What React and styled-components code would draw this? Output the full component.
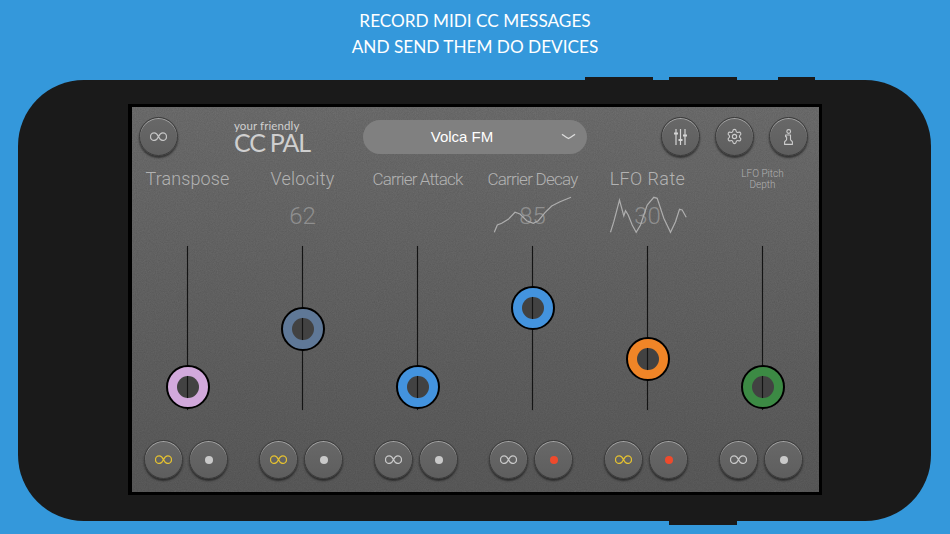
import React from "react";
import styled, { createGlobalStyle } from "styled-components";
import { Settings } from "lucide-react";

const Global = createGlobalStyle`
  html, body { margin: 0; padding: 0; background: #3498db; overflow: hidden; }
  body { width: 950px; height: 534px; font-family: "Roboto", "Liberation Sans", sans-serif; }
`;

const noise = `url("data:image/svg+xml,%3Csvg xmlns='http://www.w3.org/2000/svg' width='200' height='200'%3E%3Cfilter id='n'%3E%3CfeTurbulence type='fractalNoise' baseFrequency='.9' numOctaves='2'/%3E%3CfeColorMatrix values='0 0 0 0 0 0 0 0 0 0 0 0 0 0 0 0 0 0 .55 -.1'/%3E%3C/filter%3E%3Crect width='200' height='200' filter='url(%23n)' opacity='.3'/%3E%3C/svg%3E")`;

const Page = styled.div`
  width: 950px;
  height: 534px;
  background: #3498db;
`;
const Headline = styled.h1`
  margin: 0;
  height: 77px;
  padding-top: 8px;
  box-sizing: border-box;
  text-align: center;
  font: 400 17.2px/25.5px "Lato", "Liberation Sans", sans-serif;
  color: #fff;
`;
const SideKey = styled.div`
  display: flex;
  height: 3px;
  margin-left: 585px;
  gap: 16px;
`;
const Key = styled.span`
  width: ${(p) => p.$w}px;
  margin-right: ${(p) => p.$after || 0}px;
  background: #1a1a1a;
`;
const Phone = styled.div`
  position: relative;
  width: 913px;
  height: 441px;
  margin-left: 18px;
  box-sizing: border-box;
  padding: 24px 109px 26px 110px;
  border-radius: 66px;
  background: #1a1a1a;
`;
const BottomKey = styled.span`
  position: absolute;
  left: 651px;
  bottom: -4px;
  width: 68px;
  height: 4px;
  background: #1a1a1a;
`;
const Screen = styled.div`
  width: 694px;
  height: 391px;
  box-sizing: border-box;
  border-style: solid;
  border-color: #000;
  border-width: 3px 3px 3px 4px;
  background: ${noise}, linear-gradient(180deg, #6e6e6e 0%, #656565 45%, #5b5b5b 100%);
  display: flex;
  flex-direction: column;
  overflow: hidden;
`;
const Header = styled.header`
  display: flex;
  align-items: center;
  height: 39px;
  margin-top: 10px;
  padding-left: 7px;
`;
const Round = styled.button`
  flex: none;
  width: 39px;
  height: 39px;
  padding: 0;
  display: flex;
  align-items: center;
  justify-content: center;
  border: 1px solid #3a3a3a;
  border-radius: 50%;
  background: linear-gradient(180deg, #686868, #5e5e5e);
  color: #c4c4c4;
  box-shadow: inset 0 1px 0 rgba(255, 255, 255, 0.4), 0 2px 2px rgba(0, 0, 0, 0.5);
`;
const Logo = styled.div`
  flex: none;
  width: 76px;
  margin: 0 53px 0 56px;
  color: #cfcfcf;
  font-family: "Lato", sans-serif;
`;
const LogoSmall = styled.div`
  font-size: 11.5px;
  line-height: 12px;
  letter-spacing: 0.1px;
  white-space: nowrap;
`;
const LogoBig = styled.div`
  font-size: 25px;
  line-height: 21px;
  letter-spacing: -1.2px;
  white-space: nowrap;
`;
const Preset = styled.div`
  flex: none;
  width: 224px;
  height: 34px;
  display: flex;
  align-items: center;
  border-radius: 17px;
  background: #808080;
  color: #fff;
  font: 400 15px "Liberation Sans", sans-serif;
`;
const PresetName = styled.span`
  width: 198px;
  text-align: center;
`;
const Tools = styled.div`
  display: flex;
  gap: 15px;
  margin-left: 74px;
`;
const Channels = styled.div`
  display: grid;
  grid-template-columns: repeat(6, 115px);
  width: 690px;
  margin-left: -2px;
  margin-top: 9px;
`;
const Channel = styled.section`
  display: flex;
  flex-direction: column;
  align-items: center;
`;
const Label = styled.div`
  height: 28px;
  display: flex;
  align-items: center;
  justify-content: center;
  text-align: center;
  color: #b2b2b2;
  white-space: nowrap;
  font-weight: 300;
  font-size: ${(p) => p.$fs || 18}px;
  letter-spacing: ${(p) => p.$ls || 0}px;
  line-height: ${(p) => (p.$fs === 10 ? "11px" : "28px")};
`;
const Readout = styled.div`
  position: relative;
  width: 80px;
  height: 40px;
  margin-top: 3px;
  display: flex;
  align-items: center;
  justify-content: center;
  color: #8f8f8f;
  font-size: 24px;
  font-weight: 300;
`;
const Spark = styled.svg`
  position: absolute;
  left: 0;
  top: -1px;
`;
const Track = styled.div`
  position: relative;
  width: 1px;
  height: 164px;
  margin-top: 10px;
  background: #141414;
  box-shadow: 0 0 1px rgba(0, 0, 0, 0.6);
`;
const Thumb = styled.div`
  position: absolute;
  left: 50%;
  top: ${(p) => p.$top}px;
  width: 44px;
  height: 44px;
  box-sizing: border-box;
  transform: translate(-50%, -50%);
  display: flex;
  align-items: center;
  justify-content: center;
  border: 2px solid #000;
  border-radius: 50%;
  background: ${(p) => p.$color};
`;
const Hole = styled.div`
  position: relative;
  width: 22px;
  height: 22px;
  border-radius: 50%;
  background: #424242;
  &::after {
    content: "";
    position: absolute;
    left: 10.5px;
    top: 0;
    width: 1px;
    height: 22px;
    background: #141414;
    box-shadow: 0 0 1px rgba(0, 0, 0, 0.5);
  }
`;
const Pair = styled.div`
  display: flex;
  gap: 6px;
  margin-top: 30px;
  padding-right: 3px;
`;
const Dot = styled.span`
  width: 8px;
  height: 8px;
  border-radius: 50%;
  background: ${(p) => (p.$on ? "#ee4a2c" : "#c9c9c9")};
`;

const Loop = ({ color = "currentColor", w = 17 }) => (
  <svg width={w} height={(w * 10) / 18} viewBox="0 0 18 10" fill="none" stroke={color} strokeWidth="1.35">
    <path d="M9 5C8 3 6.6 1 4.5 1a4 4 0 0 0 0 8C6.6 9 8 7 9 5s2.4-4 4.5-4a4 4 0 0 1 0 8C11.4 9 10 7 9 5z" />
  </svg>
);
const Mixer = () => (
  <svg width="13" height="16" viewBox="0 0 13 16" fill="none" stroke="#d4d4d4" strokeWidth="1.2" strokeLinecap="butt">
    <path d="M2 0v16M6.5 0v16M11 0v16" />
    <path d="M0 4.5h4M4.5 11h4M9 6.5h4" strokeWidth="1.8" />
  </svg>
);
const Pawn = () => (
  <svg width="9" height="16" viewBox="0 0 9 16" fill="none" stroke="#cccccc" strokeWidth="1.1" strokeLinejoin="round">
    <circle cx="4.7" cy="2.5" r="1.9" />
    <path d="M1.6 6h4.9v4.6c0 .9 1.6 1.3 1.9 2.2v2.6H.6v-2.6c.3-.9 2-1.3 2-2.2V7.8h-1z" />
  </svg>
);

const decay = "1.3,37.3 4.3,30 8.7,28.3 15.3,24.3 22,17.3 27,19 33.7,25.7 40.3,28.3 45.3,25.7 52,17.7 58.7,11 67,6.7 78,2.3";
const lfo = "2.5,37.3 5.8,26.7 11.5,5 15.8,21 17.5,15.7 20.2,20 24.2,30 28.2,37.3 32.5,30 39.2,10 45.8,2.3 49.2,3.3 55.8,23.3 62.5,37.3 67.5,26.7 71.5,14.3 74.2,15 78.2,22.3";

const channels = [
  { name: "Transpose", ls: 0.1, color: "#d2a9dc", y: 141, loop: true },
  { name: "Velocity", ls: 0.3, color: "#5f7897", y: 83, loop: true, value: "62" },
  { name: "Carrier Attack", fs: 17, ls: -0.85, color: "#4393de", y: 141 },
  { name: "Carrier Decay", fs: 17, ls: -0.75, color: "#4393de", y: 62, value: "85", spark: decay, rec: true },
  { name: "LFO Rate", ls: 0.4, color: "#f08527", y: 113, loop: true, value: "30", spark: lfo, rec: true },
  { name: "LFO Pitch\nDepth", small: true, color: "#3c8a44", y: 141 },
];

export default function App() {
  return (
    <Page>
      <Global />
      <Headline>
        RECORD MIDI CC MESSAGES
        <br />
        AND SEND THEM DO DEVICES
      </Headline>
      <SideKey>
        <Key $w={68} />
        <Key $w={68} $after={25} />
        <Key $w={37} />
      </SideKey>
      <Phone>
        <BottomKey />
        <Screen>
          <Header>
            <Round>
              <Loop />
            </Round>
            <Logo>
              <LogoSmall>your friendly</LogoSmall>
              <LogoBig>CC PAL</LogoBig>
            </Logo>
            <Preset>
              <PresetName>Volca FM</PresetName>
              <svg width="15" height="7" viewBox="0 0 15 7" fill="none" stroke="#dcdcdc" strokeWidth="1.4">
                <path d="M1 1.2c2 1.4 4 3 6.5 4.3C10 4.2 12 2.6 14 1.2" />
              </svg>
            </Preset>
            <Tools>
              <Round>
                <Mixer />
              </Round>
              <Round>
                <Settings size={17} strokeWidth={1.6} color="#cccccc" />
              </Round>
              <Round>
                <Pawn />
              </Round>
            </Tools>
          </Header>
          <Channels>
            {channels.map((c) => (
              <Channel key={c.name}>
                {c.small ? (
                  <Label $fs={10}>
                    LFO Pitch
                    <br />
                    Depth
                  </Label>
                ) : (
                  <Label $fs={c.fs} $ls={c.ls}>
                    {c.name}
                  </Label>
                )}
                <Readout>
                  {c.value}
                  {c.spark && (
                    <Spark width="80" height="40" viewBox="0 0 80 40" fill="none" stroke="#aeaeae" strokeWidth="1.2">
                      <polyline points={c.spark} />
                    </Spark>
                  )}
                </Readout>
                <Track>
                  <Thumb $top={c.y} $color={c.color}>
                    <Hole />
                  </Thumb>
                </Track>
                <Pair>
                  <Round>
                    <Loop color={c.loop ? "#e3c031" : "#c8c8c8"} />
                  </Round>
                  <Round>
                    <Dot $on={c.rec} />
                  </Round>
                </Pair>
              </Channel>
            ))}
          </Channels>
        </Screen>
      </Phone>
    </Page>
  );
}
